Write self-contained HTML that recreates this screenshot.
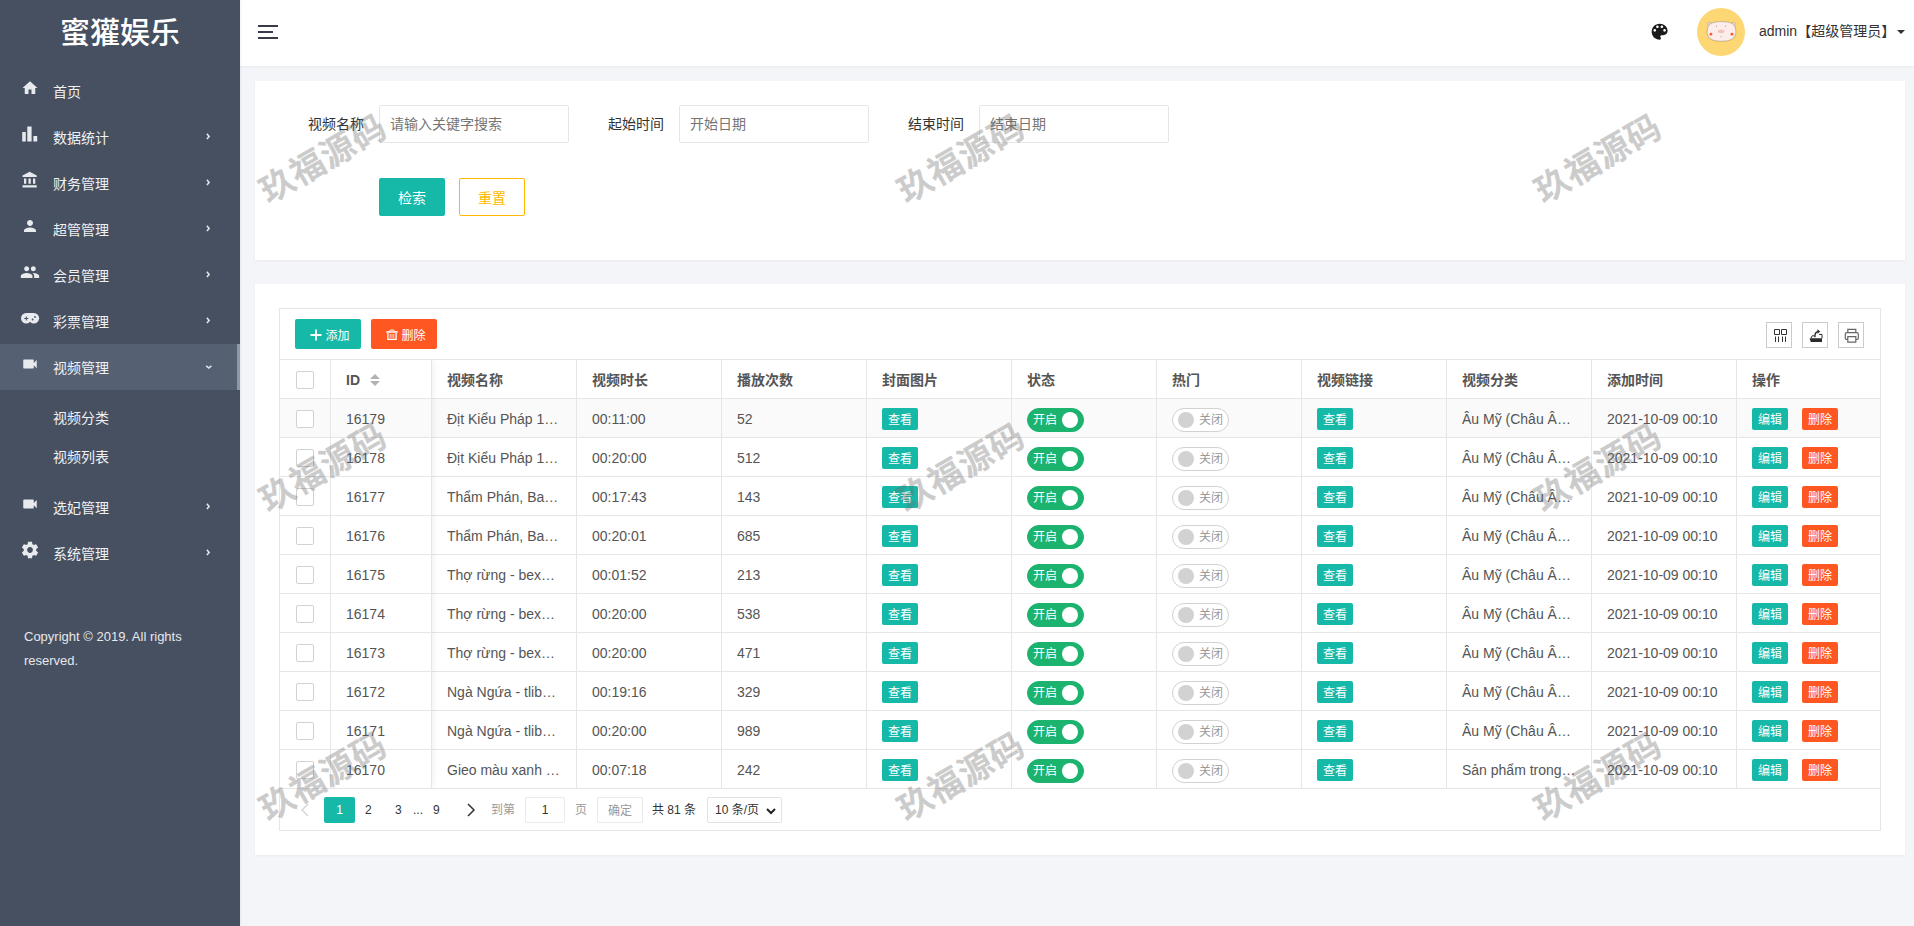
<!DOCTYPE html>
<html lang="zh-CN">
<head>
<meta charset="utf-8">
<title>蜜獾娱乐</title>
<style>
*{box-sizing:border-box;margin:0;padding:0}
html,body{width:1914px;height:926px;overflow:hidden}
body{position:relative;background:#f4f5f9;font-family:"Liberation Sans","Noto Sans CJK SC",sans-serif;font-size:14px;color:#333;line-height:24px}
a{text-decoration:none;color:inherit}
i,em{font-style:normal}
/* sidebar */
.side{position:absolute;left:0;top:0;width:240px;height:926px;background:#465061;color:#fff;z-index:5;box-shadow:1px 0 3px rgba(0,21,41,.06)}
.logo{position:absolute;left:0;top:2px;width:240px;height:64px;line-height:62px;text-align:center;font-size:30px;color:#fff;letter-spacing:0;font-weight:500}
.mi{position:absolute;left:0;width:240px;height:46px;line-height:46px;color:#f0f1f3;font-size:14px}
.mi span{position:absolute;left:53px;top:1px}
.mi svg.ic{position:absolute;left:21px;top:11px;width:18px;height:18px;fill:#e8eaed}
.mi svg.ar{position:absolute;left:204px;top:18px;width:8px;height:8px;fill:none;stroke:#dfe2e7;stroke-width:1.600;overflow:visible}
.mi.act{background:#556072}
.mi.act:after{content:"";position:absolute;right:0;top:0;width:3px;height:46px;background:#8f97a5}
.smi{position:absolute;left:53px;height:39px;line-height:41px;color:#f0f1f3;font-size:14px}
.copy{position:absolute;left:24px;top:625px;width:185px;font-size:13px;line-height:24px;color:#e6e8ec}
/* header */
.hd{position:absolute;left:240px;top:0;width:1674px;height:66px;background:#fff;box-shadow:0 1px 3px rgba(0,21,41,.04)}
.ham{position:absolute;left:18px;top:25px;width:20px;height:14px}
.pal{position:absolute;left:1409.100px;top:21.200px;width:21.300px;height:21.300px}
.av{position:absolute;left:1457px;top:8px;width:48px;height:48px;border-radius:50%;background:#fdd773;overflow:hidden}
.un{position:absolute;left:1519px;top:20px;line-height:22px;font-size:14px;color:#333;white-space:nowrap}
.caret{position:absolute;left:1657px;top:30px;width:0;height:0;border:4px solid transparent;border-top:4px solid #333;border-bottom:none}
/* cards */
.card{position:absolute;left:255px;width:1650px;background:#fff;box-shadow:0 1px 2px rgba(0,0,0,.05)}
.cd1{top:81px;height:179px}
.cd2{top:284px;height:571px}
.lab{position:absolute;top:112px;height:24px;line-height:24px;font-size:14px;color:#333;white-space:nowrap}
.inp{position:absolute;top:105px;width:190px;height:38px;border:1px solid #e6e6e6;border-radius:2px;background:#fff;line-height:36px;padding-left:10px;font-size:14px;color:#757575;white-space:nowrap}
.btn{position:absolute;top:178px;height:38px;width:66px;line-height:40px;text-align:center;border-radius:2px;font-size:14px}
.b1{left:379px;background:#16b8a8;color:#fff}
.b2{left:459px;border:1px solid #ffb800;color:#ffb800;line-height:38px;background:#fff}
/* table */
.tb{position:absolute;left:279px;top:308px;width:1602px;height:523px;border:1px solid #e6e6e6;background:#fff}
.tool{position:absolute;left:0;top:0;width:1600px;height:51px;border-bottom:1px solid #e6e6e6}
.sb{position:absolute;top:10px;height:30px;width:66px;line-height:30px;padding-left:4px;border-radius:2px;color:#fff;font-size:12px;text-align:center;white-space:nowrap}
.sb svg{display:inline-block;vertical-align:middle;margin-right:3px;margin-top:0}
.sb b{font-weight:normal;display:inline-block;vertical-align:middle;position:relative;top:1.500px}
.tt{position:absolute;top:13px;width:26px;height:26px;border:1px solid #ccc;background:#fff}
.tt svg{position:absolute;left:-1px;top:-1px;width:26px;height:26px}
table{position:absolute;left:0;top:51px;border-collapse:separate;border-spacing:0;table-layout:fixed;width:1600px}
th,td{height:39px;border:0 solid #e6e6e6;border-width:0 1px 1px 0;padding:2px 0 0 15px;text-align:left;font-size:14px;color:#555;white-space:nowrap;overflow:hidden;line-height:28px;vertical-align:middle}
tr>*:last-child{border-right-width:0}
th{font-weight:bold;color:#555;;font-family:"Liberation Sans","Noto Sans CJK SC",sans-serif}
tr.hov td{background:#fafafa}
td.c0,th.c0{padding:0;text-align:center}
.cb{display:inline-block;width:18px;height:18px;border:1px solid #d2d2d2;border-radius:2px;background:#fff;vertical-align:middle;margin-top:-1px}
.xs{display:inline-block;height:22px;line-height:24px;padding:0 6px;background:#16b8a8;color:#fff;font-size:12px;border-radius:2px;vertical-align:middle;margin-right:14px;position:relative;top:-1.300px}
.xs.dg{background:#ff5722}
.sw{display:inline-block;position:relative;width:57px;height:24px;border:1px solid #d2d2d2;border-radius:12px;vertical-align:middle;background:#fff;font-size:12px;line-height:22px}
.sw i{position:absolute;left:5px;top:3px;width:16px;height:16px;border-radius:50%;background:#d2d2d2}
.sw em{position:absolute;left:26px;top:0;color:#999}
.sw.on{background:#1cb36f;border-color:#1cb36f}
.sw.on i{left:34px;top:3px;width:16px;height:16px;background:#fff}
.sw.on em{left:5px;color:#fff}
.srt{display:inline-block;position:relative;width:10px;height:14px;vertical-align:middle;margin-left:10px;margin-top:-2px}
.srt:before,.srt:after{content:"";position:absolute;left:0;border:5px solid transparent}
.srt:before{top:-4px;border-bottom-color:#b2b2b2}
.srt:after{top:8px;border-top-color:#b2b2b2}
/* pager */
.pg{position:absolute;left:0;top:480px;width:1600px;height:41px;font-size:12px;color:#333}
.pg>*{position:absolute;top:8px;height:26px;line-height:26px;white-space:nowrap}
.pg .cur{background:#16b8a8;color:#fff;width:31px;text-align:center;border-radius:2px}
.pg .bx{border:1px solid #eaeaea;border-radius:2px;line-height:24px;text-align:center;background:#fff}
/* watermark */
.wm{position:absolute;width:200px;height:50px;margin-left:-100px;margin-top:-25px;line-height:50px;text-align:center;font-size:34px;font-weight:500;color:#6a6a6a;-webkit-text-stroke:.7px #6a6a6a;opacity:.34;transform:rotate(-30deg);letter-spacing:1px;white-space:nowrap;pointer-events:none;font-family:"Noto Sans CJK SC",sans-serif}

.fx{position:absolute;left:0;top:51px;width:152px;height:429px;box-shadow:0 -1px 8px rgba(0,0,0,.08);clip-path:inset(0 -12px 0 0);pointer-events:none}

</style>
</head>
<body>
<div class="side">
<div class="logo">蜜獾娱乐</div>
<div class="mi" style="top:68px"><svg class="ic" viewBox="0 0 24 24"><path d="M10 20v-6h4v6h5v-8h3L12 3 2 12h3v8z"/></svg><span>首页</span></div>
<div class="mi" style="top:114px"><svg class="ic" viewBox="0 0 18 18"><path d="M1.200 7h3.600v9.600H1.200zM6.300 1.400h4.300v15.200H6.300zM12.400 11.100h3.800v5.500h-3.800z"/></svg><span>数据统计</span><svg class="ar" viewBox="0 0 8 8"><path d="M2.900 1.800L5.100 4.400L2.900 7"/></svg></div>
<div class="mi" style="top:160px"><svg class="ic" viewBox="0 0 24 24"><path d="M4 10v7h3v-7H4zm6 0v7h3v-7h-3zM2 22h19v-3H2v3zm14-12v7h3v-7h-3zm-4.500-9L2 6v2h19V6l-9.500-5z"/></svg><span>财务管理</span><svg class="ar" viewBox="0 0 8 8"><path d="M2.900 1.800L5.100 4.400L2.900 7"/></svg></div>
<div class="mi" style="top:206px"><svg class="ic" viewBox="0 0 24 24"><path d="M12 12c2.210 0 4-1.790 4-4s-1.790-4-4-4-4 1.790-4 4 1.790 4 4 4zm0 2c-2.670 0-8 1.340-8 4v2h16v-2c0-2.660-5.330-4-8-4z"/></svg><span>超管管理</span><svg class="ar" viewBox="0 0 8 8"><path d="M2.900 1.800L5.100 4.400L2.900 7"/></svg></div>
<div class="mi" style="top:252px"><svg class="ic" viewBox="1.200 1 21.600 21.600" style="overflow:visible"><path d="M16 11c1.660 0 2.990-1.340 2.990-3S17.660 5 16 5c-1.660 0-3 1.340-3 3s1.340 3 3 3zm-8 0c1.660 0 2.990-1.340 2.990-3S9.660 5 8 5C6.340 5 5 6.340 5 8s1.340 3 3 3zm0 2c-2.330 0-7 1.170-7 3.500V19h14v-2.500c0-2.330-4.670-3.500-7-3.500zm8 0c-.290 0-.620.020-.970.050 1.160.840 1.970 1.970 1.970 3.450V19h6v-2.500c0-2.330-4.670-3.500-7-3.500z"/></svg><span>会员管理</span><svg class="ar" viewBox="0 0 8 8"><path d="M2.900 1.800L5.100 4.400L2.900 7"/></svg></div>
<div class="mi" style="top:298px"><svg class="ic" viewBox="0 0 18 18" style="overflow:visible"><circle cx="5.200" cy="9.200" r="5.200"/><circle cx="12.900" cy="9.200" r="5.200"/><rect x="5.200" y="4" width="7.700" height="8.700"/><path d="M3.300 9.500h4M5.300 7.500v4" stroke="#465061" stroke-width="1" fill="none"/><circle cx="14" cy="8" r=".9" fill="#465061"/><circle cx="11.600" cy="10.500" r=".9" fill="#465061"/></svg><span>彩票管理</span><svg class="ar" viewBox="0 0 8 8"><path d="M2.900 1.800L5.100 4.400L2.900 7"/></svg></div>
<div class="mi act" style="top:344px"><svg class="ic" viewBox="0 0 24 24"><path d="M17 10.500V7c0-.550-.450-1-1-1H4c-.550 0-1 .450-1 1v10c0 .550.450 1 1 1h12c.550 0 1-.450 1-1v-3.500l4 4v-11l-4 4z"/></svg><span>视频管理</span><svg class="ar" viewBox="0 0 8 8"><path d="M2.200 3.800L4.800 6L7.400 3.800"/></svg></div>
<div class="smi" style="top:398px">视频分类</div>
<div class="smi" style="top:437px">视频列表</div>
<div class="mi" style="top:484px"><svg class="ic" viewBox="0 0 24 24"><path d="M17 10.500V7c0-.550-.450-1-1-1H4c-.550 0-1 .450-1 1v10c0 .550.450 1 1 1h12c.550 0 1-.450 1-1v-3.500l4 4v-11l-4 4z"/></svg><span>选妃管理</span><svg class="ar" viewBox="0 0 8 8"><path d="M2.900 1.800L5.100 4.400L2.900 7"/></svg></div>
<div class="mi" style="top:530px"><svg class="ic" viewBox="1.100 1.100 21.800 21.800"><path d="M19.430 12.980c.040-.320.070-.640.070-.980s-.030-.660-.070-.980l2.110-1.650c.190-.150.240-.420.120-.640l-2-3.460c-.120-.220-.390-.300-.610-.220l-2.490 1c-.520-.400-1.080-.730-1.690-.980l-.380-2.650C14.460 2.180 14.250 2 14 2h-4c-.250 0-.460.180-.490.420l-.380 2.650c-.610.250-1.170.590-1.690.980l-2.490-1c-.230-.090-.490 0-.610.220l-2 3.460c-.130.220-.070.490.120.640l2.110 1.650c-.040.320-.070.650-.070.980s.030.660.070.980l-2.110 1.650c-.190.150-.240.420-.120.640l2 3.460c.120.220.390.300.610.220l2.490-1c.520.400 1.080.730 1.690.980l.380 2.650c.030.240.240.420.490.420h4c.250 0 .460-.180.490-.420l.380-2.650c.610-.250 1.170-.590 1.690-.980l2.490 1c.230.090.490 0 .610-.220l2-3.460c.120-.220.070-.490-.120-.640l-2.110-1.650zM12 15.500c-1.930 0-3.500-1.570-3.500-3.500s1.570-3.500 3.500-3.500 3.500 1.570 3.500 3.500-1.570 3.500-3.500 3.500z"/></svg><span>系统管理</span><svg class="ar" viewBox="0 0 8 8"><path d="M2.900 1.800L5.100 4.400L2.900 7"/></svg></div>
<div class="copy">Copyright © 2019. All rights reserved.</div>
</div>

<div class="hd">
<svg class="ham" viewBox="0 0 20 14"><path d="M0 0h20v2H0zM0 6h15v2H0zM0 12h20v2H0z" fill="#363c47"/></svg>
<svg class="pal" viewBox="0 0 24 24"><path fill="#1a1a1a" d="M12 3c-4.970 0-9 4.030-9 9s4.030 9 9 9c.830 0 1.500-.670 1.500-1.500 0-.390-.150-.740-.390-1.010-.230-.260-.380-.610-.380-.990 0-.830.670-1.500 1.500-1.500H16c2.760 0 5-2.240 5-5 0-4.420-4.030-8-9-8zm-5.500 9c-.830 0-1.500-.670-1.500-1.500S5.670 9 6.500 9 8 9.670 8 10.500 7.330 12 6.500 12zm3-4C8.670 8 8 7.330 8 6.500S8.670 5 9.500 5s1.500.670 1.500 1.500S10.330 8 9.500 8zm5 0c-.830 0-1.500-.670-1.500-1.500S13.670 5 14.500 5s1.500.670 1.500 1.500S15.330 8 14.500 8zm3 4c-.830 0-1.500-.670-1.500-1.500S16.670 9 17.500 9s1.500.670 1.500 1.500-.670 1.500-1.500 1.500z"/></svg>
<div class="av"><svg viewBox="0 0 48 48" width="48" height="48"><circle cx="12.600" cy="16.200" r="1.900" fill="#fbdcd8" stroke="#7a6a60" stroke-width=".3"/><circle cx="36.400" cy="16.200" r="1.900" fill="#fbdcd8" stroke="#7a6a60" stroke-width=".3"/><path d="M12 17.200C14 14.600 19 13.600 24.500 13.600S35 14.600 37 17.200C39.600 21 39.600 27 36.600 30C33.500 33 28 33.200 24.500 33.200S15.500 33 12.400 30C9.400 27 9.400 21 12 17.200Z" fill="#fdedea" stroke="#6b5a50" stroke-width=".35"/><ellipse cx="24.200" cy="23.300" rx="3.300" ry="1.900" fill="#f6c0bb"/><circle cx="13.900" cy="26.200" r="1.400" fill="#ff5a2a"/><circle cx="34.900" cy="26.200" r="1.400" fill="#ff5a2a"/><rect x="19.400" y="17.500" width=".5" height="1.400" fill="#777"/><rect x="28.300" y="17.500" width=".5" height="1.400" fill="#777"/><path d="M23.800 28l.8 1.200" stroke="#666" stroke-width=".5"/></svg></div>
<div class="un">admin【超级管理员】</div>
<i class="caret"></i>
</div>
<div class="card cd1"></div>
<div class="lab" style="left:308px">视频名称</div><div class="inp" style="left:379px">请输入关键字搜索</div>
<div class="lab" style="left:608px">起始时间</div><div class="inp" style="left:679px">开始日期</div>
<div class="lab" style="left:908px">结束时间</div><div class="inp" style="left:979px">结束日期</div>
<a class="btn b1">检索</a><a class="btn b2">重置</a>
<div class="card cd2"></div>

<div class="tb">
<div class="tool">
<a class="sb" style="left:15px;background:#16b8a8"><svg width="12" height="12" viewBox="0 0 12 12"><path d="M6 0.500v11M0.500 6h11" stroke="#fff" stroke-width="1.800"/></svg><b>添加</b></a>
<a class="sb" style="left:91px;background:#ff5722"><svg width="12" height="12" viewBox="0 0 12 12" style="margin-top:1px"><path d="M0.300 3h11.400" stroke="#fff" stroke-width="1.500" fill="none"/><path d="M3.400 2.400l.9-1.400h3.400l.9 1.400" stroke="#fff" stroke-width="1" fill="none"/><path d="M1.900 4v6.400h8.200V4" stroke="#fff" stroke-width="1.300" fill="none"/><path d="M4.200 5v4.200M6 5v4.200M7.800 5v4.200" stroke="#fff" stroke-width=".9" fill="none" opacity=".85"/></svg><b>删除</b></a>
<span class="tt" style="left:1486px"><svg viewBox="0 0 26 26"><path d="M8.500 7.500h5v5h-5zM15.500 7.500h5v5h-5zM9.500 14.500v5.500M12.500 14.500v5.500M16.500 14.500v5.500M19.500 14.500v5.500" stroke="#333" stroke-width="1" fill="none"/></svg></span>
<span class="tt" style="left:1522px"><svg viewBox="0 0 26 26"><path d="M7.600 16.200h12.400v3.900h-11.200z" fill="#2b2b2b"/><path d="M9 16.200l1.200-2.400h2.300M17 12.400h3v4" stroke="#2b2b2b" stroke-width="1" fill="none"/><path d="M12.900 15.200c-.2-3.200.9-5.300 3.200-5.600" stroke="#2b2b2b" stroke-width="1.400" fill="none"/><path d="M15.400 7.200l2.800 2.300-2.800 2.300z" fill="#2b2b2b"/></svg></span>
<span class="tt" style="left:1558px"><svg viewBox="0 0 26 26"><path d="M9.800 10.600V7.400h8v3.200M9.800 17.400H8.400a1.100 1.100 0 0 1-1.100-1.100V12.200a1.600 1.600 0 0 1 1.600-1.600h9.800a1.600 1.600 0 0 1 1.600 1.600v4.100a1.100 1.100 0 0 1-1.100 1.100H17.800M9.800 14.600h8v5.600h-8z" stroke="#666" stroke-width="1.200" fill="none"/></svg></span>
</div>
<table>
<colgroup><col style="width:51px"><col style="width:101px"><col style="width:145px"><col style="width:145px"><col style="width:145px"><col style="width:145px"><col style="width:145px"><col style="width:145px"><col style="width:145px"><col style="width:145px"><col style="width:145px"><col style="width:143px"></colgroup>
<thead><tr><th class="c0"><i class="cb"></i></th><th>ID<i class="srt"></i></th><th>视频名称</th><th>视频时长</th><th>播放次数</th><th>封面图片</th><th>状态</th><th>热门</th><th>视频链接</th><th>视频分类</th><th>添加时间</th><th>操作</th></tr></thead>
<tbody>
<tr class="hov"><td class="c0"><i class="cb"></i></td><td>16179</td><td>Địt Kiểu Pháp 1…</td><td>00:11:00</td><td>52</td><td><a class="xs">查看</a></td><td><span class="sw on"><em>开启</em><i></i></span></td><td><span class="sw"><i></i><em>关闭</em></span></td><td><a class="xs">查看</a></td><td>Âu Mỹ (Châu Â…</td><td>2021-10-09 00:10</td><td><a class="xs">编辑</a><a class="xs dg">删除</a></td></tr>
<tr><td class="c0"><i class="cb"></i></td><td>16178</td><td>Địt Kiểu Pháp 1…</td><td>00:20:00</td><td>512</td><td><a class="xs">查看</a></td><td><span class="sw on"><em>开启</em><i></i></span></td><td><span class="sw"><i></i><em>关闭</em></span></td><td><a class="xs">查看</a></td><td>Âu Mỹ (Châu Â…</td><td>2021-10-09 00:10</td><td><a class="xs">编辑</a><a class="xs dg">删除</a></td></tr>
<tr><td class="c0"><i class="cb"></i></td><td>16177</td><td>Thẩm Phán, Ba…</td><td>00:17:43</td><td>143</td><td><a class="xs">查看</a></td><td><span class="sw on"><em>开启</em><i></i></span></td><td><span class="sw"><i></i><em>关闭</em></span></td><td><a class="xs">查看</a></td><td>Âu Mỹ (Châu Â…</td><td>2021-10-09 00:10</td><td><a class="xs">编辑</a><a class="xs dg">删除</a></td></tr>
<tr><td class="c0"><i class="cb"></i></td><td>16176</td><td>Thẩm Phán, Ba…</td><td>00:20:01</td><td>685</td><td><a class="xs">查看</a></td><td><span class="sw on"><em>开启</em><i></i></span></td><td><span class="sw"><i></i><em>关闭</em></span></td><td><a class="xs">查看</a></td><td>Âu Mỹ (Châu Â…</td><td>2021-10-09 00:10</td><td><a class="xs">编辑</a><a class="xs dg">删除</a></td></tr>
<tr><td class="c0"><i class="cb"></i></td><td>16175</td><td>Thợ rừng - bex…</td><td>00:01:52</td><td>213</td><td><a class="xs">查看</a></td><td><span class="sw on"><em>开启</em><i></i></span></td><td><span class="sw"><i></i><em>关闭</em></span></td><td><a class="xs">查看</a></td><td>Âu Mỹ (Châu Â…</td><td>2021-10-09 00:10</td><td><a class="xs">编辑</a><a class="xs dg">删除</a></td></tr>
<tr><td class="c0"><i class="cb"></i></td><td>16174</td><td>Thợ rừng - bex…</td><td>00:20:00</td><td>538</td><td><a class="xs">查看</a></td><td><span class="sw on"><em>开启</em><i></i></span></td><td><span class="sw"><i></i><em>关闭</em></span></td><td><a class="xs">查看</a></td><td>Âu Mỹ (Châu Â…</td><td>2021-10-09 00:10</td><td><a class="xs">编辑</a><a class="xs dg">删除</a></td></tr>
<tr><td class="c0"><i class="cb"></i></td><td>16173</td><td>Thợ rừng - bex…</td><td>00:20:00</td><td>471</td><td><a class="xs">查看</a></td><td><span class="sw on"><em>开启</em><i></i></span></td><td><span class="sw"><i></i><em>关闭</em></span></td><td><a class="xs">查看</a></td><td>Âu Mỹ (Châu Â…</td><td>2021-10-09 00:10</td><td><a class="xs">编辑</a><a class="xs dg">删除</a></td></tr>
<tr><td class="c0"><i class="cb"></i></td><td>16172</td><td>Ngà Ngứa - tlib…</td><td>00:19:16</td><td>329</td><td><a class="xs">查看</a></td><td><span class="sw on"><em>开启</em><i></i></span></td><td><span class="sw"><i></i><em>关闭</em></span></td><td><a class="xs">查看</a></td><td>Âu Mỹ (Châu Â…</td><td>2021-10-09 00:10</td><td><a class="xs">编辑</a><a class="xs dg">删除</a></td></tr>
<tr><td class="c0"><i class="cb"></i></td><td>16171</td><td>Ngà Ngứa - tlib…</td><td>00:20:00</td><td>989</td><td><a class="xs">查看</a></td><td><span class="sw on"><em>开启</em><i></i></span></td><td><span class="sw"><i></i><em>关闭</em></span></td><td><a class="xs">查看</a></td><td>Âu Mỹ (Châu Â…</td><td>2021-10-09 00:10</td><td><a class="xs">编辑</a><a class="xs dg">删除</a></td></tr>
<tr><td class="c0"><i class="cb"></i></td><td>16170</td><td>Gieo màu xanh …</td><td>00:07:18</td><td>242</td><td><a class="xs">查看</a></td><td><span class="sw on"><em>开启</em><i></i></span></td><td><span class="sw"><i></i><em>关闭</em></span></td><td><a class="xs">查看</a></td><td>Sản phẩm trong…</td><td>2021-10-09 00:10</td><td><a class="xs">编辑</a><a class="xs dg">删除</a></td></tr>
</tbody>
</table>
<div class="fx"></div>
<div class="pg">
<svg style="left:20px;top:14px;width:10px;height:14px" viewBox="0 0 10 14"><path d="M8 1L2 7l6 6" stroke="#d2d2d2" stroke-width="1.300" fill="none"/></svg>
<span class="cur" style="left:44px">1</span>
<span style="left:85px">2</span>
<span style="left:115px">3</span>
<span style="left:133px">...</span>
<span style="left:153px">9</span>
<svg style="left:186px;top:14px;width:10px;height:14px" viewBox="0 0 10 14"><path d="M2 1l6 6-6 6" stroke="#333" stroke-width="1.500" fill="none"/></svg>
<span style="left:211px;color:#999">到第</span>
<span class="bx" style="left:245px;width:40px;color:#333">1</span>
<span style="left:295px;color:#999">页</span>
<span class="bx" style="left:317px;width:46px;color:#999;line-height:26px">确定</span>
<span style="left:372px">共 81 条</span>
<span class="bx" style="left:427px;width:75px;text-align:left;padding-left:7px;border-color:#e2e2e2">10 条/页<svg style="position:absolute;left:58px;top:10px;width:10px;height:7px" viewBox="0 0 10 7"><path d="M1 1l4 4 4-4" stroke="#222" stroke-width="2" fill="none"/></svg></span>
</div>
</div>

<div class="wm" style="left:321.7px;top:156.6px">玖福源码</div>
<div class="wm" style="left:959.5px;top:156.6px">玖福源码</div>
<div class="wm" style="left:1597.2px;top:156.6px">玖福源码</div>
<div class="wm" style="left:321.7px;top:466px">玖福源码</div>
<div class="wm" style="left:959.5px;top:466px">玖福源码</div>
<div class="wm" style="left:1597.2px;top:466px">玖福源码</div>
<div class="wm" style="left:321.7px;top:774.5px">玖福源码</div>
<div class="wm" style="left:959.5px;top:774.5px">玖福源码</div>
<div class="wm" style="left:1597.2px;top:774.5px">玖福源码</div>
</body>
</html>
